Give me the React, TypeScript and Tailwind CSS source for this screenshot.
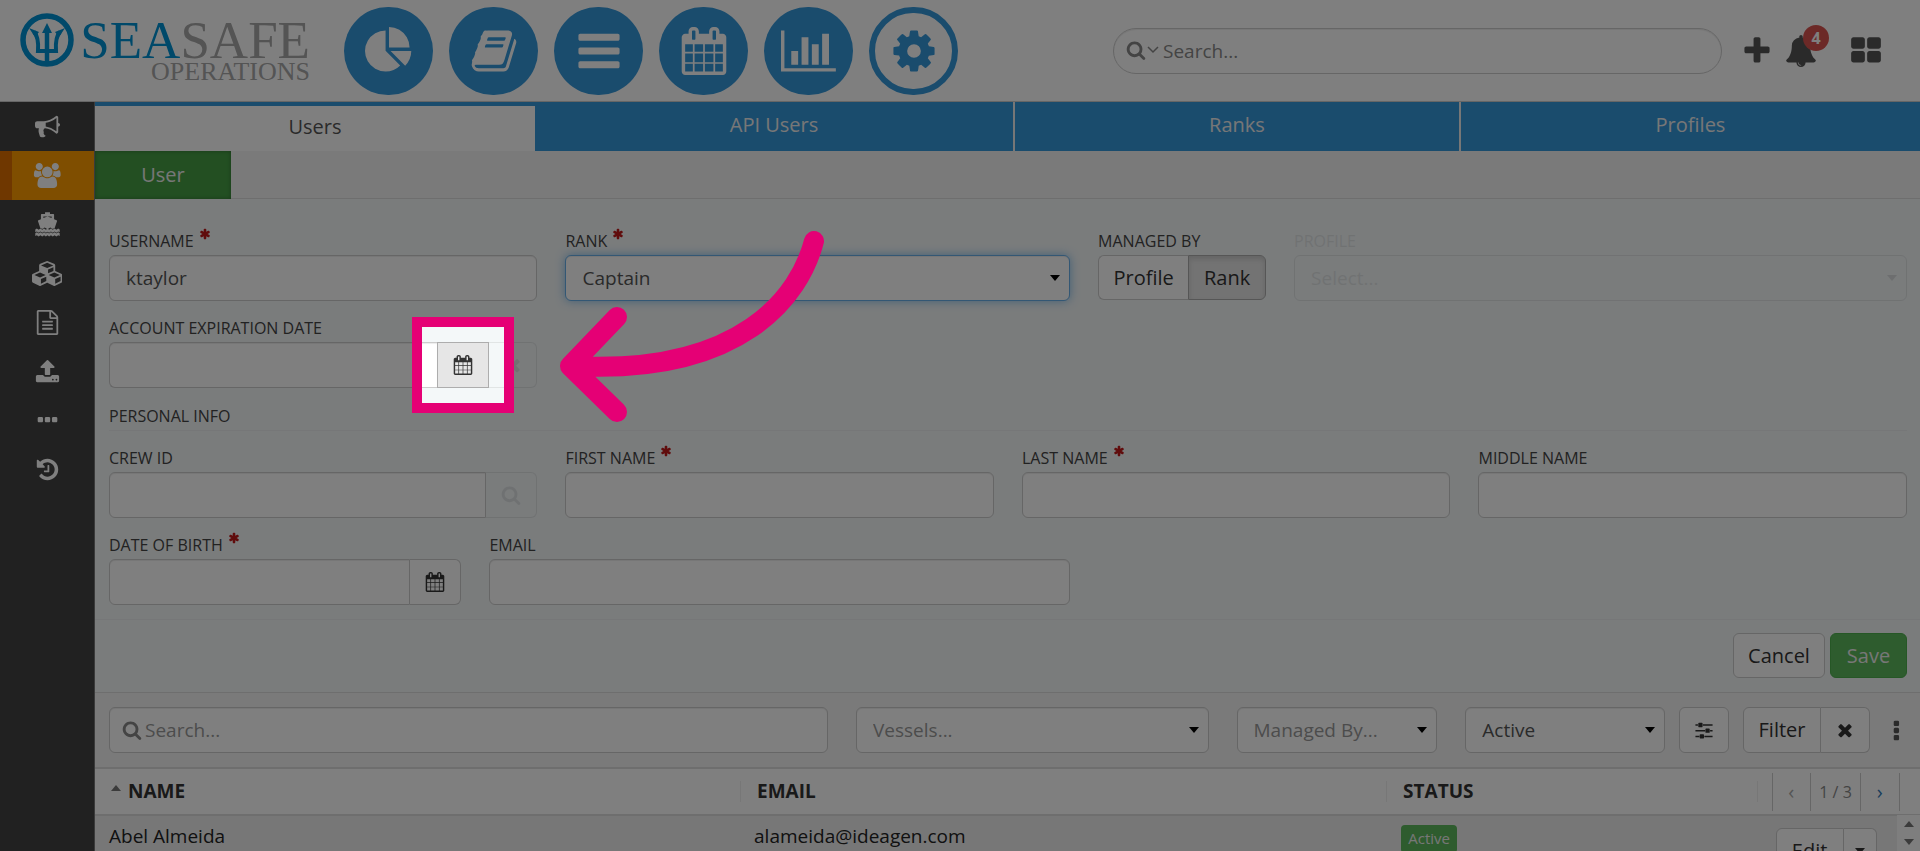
import type { ReactNode } from "react";
import clsx from "clsx";

const icons = {
  search:
    "M1216 832q0-185-131.5-316.5t-316.5-131.5-316.5 131.5-131.5 316.5 131.5 316.5 316.5 131.5 316.5-131.5 131.5-316.5zm512 832q0 52-38 90t-90 38q-54 0-90-38l-343-342q-179 124-399 124-143 0-273.5-55.5t-225-150-150-225-55.5-273.5 55.5-273.5 150-225 225-150 273.5-55.5 273.5 55.5 225 150 150 225 55.5 273.5q0 220-124 399l343 343q37 37 37 90z",
  plus: "M1600 736v192q0 40-28 68t-68 28h-416v416q0 40-28 68t-68 28h-192q-40 0-68-28t-28-68v-416h-416q-40 0-68-28t-28-68v-192q0-40 28-68t68-28h416v-416q0-40 28-68t68-28h192q40 0 68 28t28 68v416h416q40 0 68 28t28 68z",
  bars: "M1664 1344v128q0 26-19 45t-45 19h-1408q-26 0-45-19t-19-45v-128q0-26 19-45t45-19h1408q26 0 45 19t19 45zm0-512v128q0 26-19 45t-45 19h-1408q-26 0-45-19t-19-45v-128q0-26 19-45t45-19h1408q26 0 45 19t19 45zm0-512v128q0 26-19 45t-45 19h-1408q-26 0-45-19t-19-45v-128q0-26 19-45t45-19h1408q26 0 45 19t19 45z",
  calendar:
    "M192 1664h288v-288h-288v288zm352 0h320v-288h-320v288zm-352-352h288v-320h-288v320zm352 0h320v-320h-320v320zm-352-384h288v-288h-288v288zm736 736h320v-288h-320v288zm-384-736h320v-288h-320v288zm768 736h288v-288h-288v288zm-384-352h320v-320h-320v320zm-352-864v-288q0-13-9.500-22.500t-22.500-9.500h-64q-13 0-22.500 9.500t-9.500 22.500v288q0 13 9.500 22.500t22.500 9.500h64q13 0 22.500-9.500t9.500-22.500zm736 864h288v-320h-288v320zm-384-384h320v-288h-320v288zm384 0h288v-288h-288v288zm32-480v-288q0-13-9.500-22.500t-22.500-9.500h-64q-13 0-22.500 9.500t-9.500 22.500v288q0 13 9.500 22.500t22.500 9.500h64q13 0 22.500-9.500t9.500-22.500zm384-64v1280q0 52-38 90t-90 38h-1408q-52 0-90-38t-38-90v-1280q0-52 38-90t90-38h128v-96q0-66 47-113t113-47h64q66 0 113 47t47 113v96h384v-96q0-66 47-113t113-47h64q66 0 113 47t47 113v96h128q52 0 90 38t38 90z",
  barChart: "M640 896v512h-256v-512h256zm384-512v1024h-256v-1024h256zm1024 1152v128h-2048v-1536h128v1408h1920zm-640-896v768h-256v-768h256zm384-384v1152h-256v-1152h256z",
  cog: "M1152 896q0-106-75-181t-181-75-181 75-75 181 75 181 181 75 181-75 75-181zm512-109v222q0 12-8 23t-20 13l-185 28q-19 54-39 91 35 50 107 138 10 12 10 25t-9 23q-27 37-99 108t-94 71q-12 0-26-9l-138-108q-44 23-91 38-16 136-29 186-7 28-36 28h-222q-14 0-24.500-8.500t-11.500-21.500l-28-184q-49-16-90-37l-141 107q-10 9-25 9-14 0-25-11-126-114-165-168-7-10-7-23 0-12 8-23 15-21 51-66.500t54-70.500q-27-50-41-99l-183-27q-13-2-21-12.500t-8-23.500v-222q0-12 8-23t19-13l186-28q14-46 39-92-40-57-107-138-10-12-10-24 0-10 9-23 26-36 98.500-107.500t94.500-71.500q13 0 26 10l138 107q44-23 91-38 16-136 29-186 7-28 36-28h222q14 0 24.500 8.500t11.500 21.500l28 184q49 16 90 37l142-107q9-9 24-9 13 0 25 10 129 119 165 170 7 8 7 22 0 12-8 23-15 21-51 66.500t-54 70.500q26 50 41 98l183 28q13 2 21 12.500t8 23.500z",
  pie: "M768 890l546 546q-106 108-247.500 168t-298.500 60q-209 0-385.500-103t-279.500-279.500-103-385.500 103-385.500 279.500-279.500 385.500-103v762zm187 6h773q0 157-60 298.500t-168 247.500zm709-128h-768v-768q209 0 385.500 103t279.500 279.500 103 385.500z",
  book: "M1703 478q40 57 18 129l-275 906q-19 64-76.500 107.500t-122.500 43.500h-923q-77 0-148.500-53.500t-99.500-131.500q-24-67-2-127 0-4 3-27t4-37q1-8-3-21.500t-3-19.500q2-11 8-21t16.500-23.500 16.500-23.500q23-38 45-91.500t30-91.500q3-10 .5-30t-.5-28q3-11 17-28t17-23q21-36 42-92t25-90q1-9-2.500-32t.5-28q4-13 22-30.500t22-22.500q19-26 42.500-84.500t27.500-96.500q1-8-3-25.500t-2-26.500q2-8 9-18t18-23 17-21q8-12 16.500-30.500t15-35 16-36 19.500-32 26.500-23.500 36-11.500 47.500 5.500l-1 3q38-9 51-9h761q74 0 114 56t18 130l-274 906q-36 119-71.500 153.500t-128.500 34.500h-869q-27 0-38 15-11 16-1 43 24 70 144 70h923q29 0 56-15.500t35-41.500l300-987q7-22 5-57 38 15 59 43zm-1064 2q-4 13 2 22.500t20 9.500h608q13 0 25.500-9.500t16.500-22.500l21-64q4-13-2-22.500t-20-9.500h-608q-13 0-25.500 9.500t-16.500 22.500zm-83 256q-4 13 2 22.500t20 9.500h608q13 0 25.500-9.500t16.500-22.500l21-64q4-13-2-22.500t-20-9.500h-608q-13 0-25.500 9.500t-16.500 22.500z",
  bullhorn:
    "M1664 640q53 0 90.500 37.500t37.500 90.500-37.500 90.500-90.500 37.500v384q0 52-38 90t-90 38q-417-347-812-380-58 19-91 66t-31 100.500 40 92.500q-20 33-23 65.500t6 58 33.500 55 48 50 61.500 50.500q-29 58-111.500 83t-168.500 11.500-132-55.500q-7-23-29.500-87.500t-32-94.500-23-89-15-101 3.500-98.500 22-110.500h-122q-66 0-113-47t-47-113v-192q0-66 47-113t113-47h480q435 0 896-384 52 0 90 38t38 90v384zm-128 604v-954q-394 302-768 343v270q377 42 768 341z",
  users:
    "M657 896q-162 5-265 128h-134q-82 0-138-40.500t-56-118.500q0-353 124-353 6 0 43.500 21t97.500 42.500 119 21.500q67 0 133-23-5 37-5 66 0 139 81 256zm1071 637q0 120-73 189.500t-194 69.500h-874q-121 0-194-69.500t-73-189.500q0-53 3.500-103.500t14-109 26.500-108.500 43-97.500 62-81 85.500-53.500 111.500-20q10 0 43 21.500t73 48 107 48 135 21.500 135-21.500 107-48 73-48 43-21.500q61 0 111.500 20t85.500 53.500 62 81 43 97.500 26.500 108.500 14 109 3.500 103.500zm-1024-1277q0 106-75 181t-181 75-181-75-75-181 75-181 181-75 181 75 75 181zm704 384q0 159-112.500 271.500t-271.500 112.500-271.500-112.500-112.500-271.500 112.500-271.500 271.500-112.500 271.500 112.500 112.500 271.500zm576 225q0 78-56 118.500t-138 40.500h-134q-103-123-265-128 81-117 81-256 0-29-5-66 66 23 133 23 59 0 119-21.500t97.500-42.500 43.500-21q124 0 124 353zm-128-609q0 106-75 181t-181 75-181-75-75-181 75-181 181-75 181 75 75 181z",
  cubes:
    "M640 1632l384-192v-314l-384 164v342zm-64-454l404-173-404-173-404 173zm1088 454l384-192v-314l-384 164v342zm-64-454l404-173-404-173-404 173zm-448-293l384-165v-266l-384 164v267zm-64-379l441-189-441-189-441 189zm1088 518v416q0 36-19 67t-52 47l-448 224q-25 14-57 14t-57-14l-448-224q-4-2-7-4-2 2-7 4l-448 224q-25 14-57 14t-57-14l-448-224q-33-16-52-47t-19-67v-416q0-38 21.500-70t56.500-48l434-186v-400q0-38 21.500-70t56.500-48l448-192q23-10 50-10t50 10l448 192q35 16 56.500 48t21.500 70v400l434 186q36 16 57 48t21 70z",
  file: "M1596 380q28 28 48 76t20 88v1152q0 40-28 68t-68 28h-1344q-40 0-68-28t-28-68v-1600q0-40 28-68t68-28h896q40 0 88 20t76 48zm-444-244v376h376q-10-29-22-41l-313-313q-12-12-41-22zm384 1528v-1024h-416q-40 0-68-28t-28-68v-416h-768v1536h1280zm-1024-864q0-14 9-23t23-9h704q14 0 23 9t9 23v64q0 14-9 23t-23 9h-704q-14 0-23-9t-9-23v-64zm736 224q14 0 23 9t9 23v64q0 14-9 23t-23 9h-704q-14 0-23-9t-9-23v-64q0-14 9-23t23-9h704zm0 256q14 0 23 9t9 23v64q0 14-9 23t-23 9h-704q-14 0-23-9t-9-23v-64q0-14 9-23t23-9h704z",
  upload:
    "M1344 1472q0-26-19-45t-45-19-45 19-19 45 19 45 45 19 45-19 19-45zm256 0q0-26-19-45t-45-19-45 19-19 45 19 45 45 19 45-19 19-45zm128-224v320q0 40-28 68t-68 28h-1472q-40 0-68-28t-28-68v-320q0-40 28-68t68-28h427q21 56 70.500 92t110.500 36h256q61 0 110.500-36t70.500-92h427q40 0 68 28t28 68zm-325-648q-17 40-59 40h-256v448q0 26-19 45t-45 19h-256q-26 0-45-19t-19-45v-448h-256q-42 0-59-40-17-39 14-69l448-448q18-19 45-19t45 19l448 448q31 30 14 69z",
  ellipsis:
    "M576 736v192q0 40-28 68t-68 28h-192q-40 0-68-28t-28-68v-192q0-40 28-68t68-28h192q40 0 68 28t28 68zm512 0v192q0 40-28 68t-68 28h-192q-40 0-68-28t-28-68v-192q0-40 28-68t68-28h192q40 0 68 28t28 68zm512 0v192q0 40-28 68t-68 28h-192q-40 0-68-28t-28-68v-192q0-40 28-68t68-28h192q40 0 68 28t28 68z",
  history:
    "M1664 896q0 156-61 298t-164 245-245 164-298 61q-172 0-327-72.500t-264-204.500q-7-10-6.500-22.500t8.500-20.500l137-138q10-9 25-9 16 2 23 12 73 95 179 147t225 52q104 0 198.500-40.500t163.500-109.500 109.500-163.500 40.500-198.500-40.500-198.500-109.500-163.500-163.500-109.500-198.500-40.500q-98 0-188 35.500t-160 101.500l137 138q31 30 14 69-17 40-59 40h-448q-26 0-45-19t-19-45v-448q0-42 40-59 39-17 69 14l130 129q107-101 244.500-156.500t284.500-55.500q156 0 298 61t245 164 164 245 61 298zm-640-288v448q0 14-9 23t-23 9h-320q-14 0-23-9t-9-23v-64q0-14 9-23t23-9h224v-352q0-14 9-23t23-9h64q14 0 23 9t9 23z",
  thLarge:
    "M832 1024v384q0 52-38 90t-90 38h-512q-52 0-90-38t-38-90v-384q0-52 38-90t90-38h512q52 0 90 38t38 90zm0-768v384q0 52-38 90t-90 38h-512q-52 0-90-38t-38-90v-384q0-52 38-90t90-38h512q52 0 90 38t38 90zm896 768v384q0 52-38 90t-90 38h-512q-52 0-90-38t-38-90v-384q0-52 38-90t90-38h512q52 0 90 38t38 90zm0-768v384q0 52-38 90t-90 38h-512q-52 0-90-38t-38-90v-384q0-52 38-90t90-38h512q52 0 90 38t38 90z",
  bell: "M912 1696q0-16-16-16-59 0-101.500-42.500t-42.500-101.500q0-16-16-16t-16 16q0 73 51.500 124.500t124.500 51.500q16 0 16-16zm816-288q0 52-38 90t-90 38h-448q0 106-75 181t-181 75-181-75-75-181h-448q-52 0-90-38t-38-90q50-42 91-88t85-119.500 74.500-158.500 50-206 19.500-260q0-152 117-282.500t307-158.500q-8-19-8-39 0-40 28-68t68-28 68 28 28 68q0 20-8 39 190 28 307 158.500t117 282.500q0 139 19.500 260t50 206 74.500 158.500 85 119.500 91 88z",
  times:
    "M1490 1322q0 40-28 68l-136 136q-28 28-68 28t-68-28l-294-294-294 294q-28 28-68 28t-68-28l-136-136q-28-28-28-68t28-68l294-294-294-294q-28-28-28-68t28-68l136-136q28-28 68-28t68 28l294 294 294-294q28-28 68-28t68 28l136 136q28 28 28 68t-28 68l-294 294 294 294q28 28 28 68z",
  asterisk:
    "M1546 1050q46 26 59.500 77.500t-12.500 97.500l-64 110q-26 46-77.500 59.500t-97.500-12.500l-266-153v307q0 52-38 90t-90 38h-128q-52 0-90-38t-38-90v-307l-266 153q-46 26-97.500 12.500t-77.500-59.500l-64-110q-26-46-12.500-97.500t59.500-77.500l266-154-266-154q-46-26-59.500-77.500t12.500-97.500l64-110q26-46 77.500-59.500t97.500 12.500l266 153v-307q0-52 38-90t90-38h128q52 0 90 38t38 90v307l266-153q46-26 97.500-12.500t77.500 59.500l64 110q26 46 12.500 97.500t-59.500 77.500l-266 154z",
  sliders:
    "M480 1408v128h-352v-128h352zm352-128q26 0 45 19t19 45v256q0 26-19 45t-45 19h-256q-26 0-45-19t-19-45v-256q0-26 19-45t45-19h256zm160-384v128h-864v-128h864zm-640-512v128h-224v-128h224zm1312 1024v128h-736v-128h736zm-960-1152q26 0 45 19t19 45v256q0 26-19 45t-45 19h-256q-26 0-45-19t-19-45v-256q0-26 19-45t45-19h256zm640 512q26 0 45 19t19 45v256q0 26-19 45t-45 19h-256q-26 0-45-19t-19-45v-256q0-26 19-45t45-19h256zm320 128v128h-224v-128h224zm0-512v128h-864v-128h864z",
  ship: "M720 20h352v120h240q56 0 56 56v320l180 70q48 20 34 68l-170 500q-58 46-126 46-70 0-130-62-30-24-60-24t-60 24q-70 62-140 62t-140-62q-30-24-60-24t-60 24q-60 62-130 62-68 0-126-46l-170-500q-14-48 34-68l180-70v-320q0-56 56-56h240v-120zm-120 300v110l296-110 296 110v-110h-592zM20 1250l110-70 130 90 130-90 130 90 130-90 130 90 116-80 116 80 130-90 130 90 130-90 130 90 130-90 110 70v210l-110-60-130 90-130-90-130 90-130-90-130 90-116-80-116 80-130-90-130 90-130-90-130 90-130-90-110 60zM20 1530l110-70 130 90 130-90 130 90 130-90 130 90 116-80 116 80 130-90 130 90 130-90 130 90 130-90 110 70v190l-110-60-130 90-130-90-130 90-130-90-130 90-116-80-116 80-130-90-130 90-130-90-130 90-130-90-110 60z",
};

type IconName = keyof typeof icons;

const viewBoxes: Partial<Record<IconName, string>> = {
  barChart: "0 0 2048 1792",
  users: "0 0 2048 1792",
  cubes: "0 0 2176 1792",
};

function Icon({ name, className }: { name: IconName; className?: string }) {
  return (
    <svg viewBox={viewBoxes[name] ?? "0 0 1792 1792"} fill="currentColor" className={clsx("shrink-0", className)} aria-hidden="true">
      <path d={icons[name]} />
    </svg>
  );
}

function Caret({ className }: { className?: string }) {
  return (
    <svg viewBox="0 0 10 6" fill="currentColor" className={clsx("h-[6px] w-[10px]", className)} aria-hidden="true">
      <path d="M0 0h10L5 6z" />
    </svg>
  );
}

const box = "h-[46px] w-full min-w-0 rounded-md border px-4 text-[19px] outline-none placeholder:text-[#999]";
const control = clsx(box, "border-[#ccc] bg-white text-[#555] shadow-[inset_0_1px_1px_rgba(0,0,0,0.075)]");
const button = "flex items-center justify-center border border-[#ccc] bg-white text-[20px] text-[#333]";
const disabledButton = "flex h-[46px] shrink-0 items-center justify-center rounded-r-md border border-l-0 border-[#444] text-[#333] opacity-10";

type FieldProps = {
  id: string;
  label: string;
  required?: boolean;
  className?: string;
  children: ReactNode;
};

function Field({ id, label, required, className, children }: FieldProps) {
  return (
    <div className={className}>
      <label htmlFor={id} className="mb-px flex gap-[5px] text-[16px] leading-[26px] text-[#444] uppercase">
        {label}
        {required && <Icon name="asterisk" className="size-3 text-[#c01818]" />}
      </label>
      {children}
    </div>
  );
}

type SelectProps = {
  id: string;
  value: string;
  label?: string;
  variant?: "default" | "muted" | "focused" | "disabled";
};

const selectStyles = {
  default: "border-[#ccc] bg-white text-[#555] shadow-[inset_0_1px_1px_rgba(0,0,0,0.075)]",
  muted: "border-[#ccc] bg-white text-[#999] shadow-[inset_0_1px_1px_rgba(0,0,0,0.075)]",
  focused: "border-[#66afe9] bg-white text-[#555] shadow-[inset_0_1px_1px_rgba(0,0,0,0.075),0_0_10px_rgba(102,175,233,0.8)]",
  disabled: "border-[#444] bg-transparent text-[#444]",
};

function Select({ id, value, label, variant = "default" }: SelectProps) {
  return (
    <div className="relative">
      <select
        id={id}
        aria-label={label}
        disabled={variant === "disabled"}
        className={clsx(box, "appearance-none opacity-100", selectStyles[variant])}
      >
        <option>{value}</option>
      </select>
      <Caret className="pointer-events-none absolute top-5 right-[10px] text-black" />
    </div>
  );
}

function Logo() {
  return (
    <div className="flex w-[310px] justify-between pl-5">
      <svg viewBox="0 0 54 54" className="mt-[13px] size-[54px] shrink-0" fill="none" stroke="#0092d4" aria-hidden="true">
        <circle cx="27" cy="27" r="24" strokeWidth="5.500" />
        <path d="M27 18v33" strokeWidth="4.500" />
        <path d="M14 19q5 5 4 19h18q-1-14 4-19" strokeWidth="4" />
        <path d="M27 10l5 10H22zM9 15l10 4-4 5zM45 15l-10 4 4 5z" fill="#0092d4" stroke="none" />
      </svg>
      <div className="flex flex-col items-end pt-[19px] font-['Liberation_Serif',serif] text-[#a8a8a8]">
        <span className="text-[53px] leading-[42px]">
          <span className="text-[#0092d4]">SEA</span>SAFE
        </span>
        <span className="text-[26px] leading-[22px]">OPERATIONS</span>
      </div>
    </div>
  );
}

const modules: { icon: IconName; label: string; active?: boolean }[] = [
  { icon: "pie", label: "Dashboard" },
  { icon: "book", label: "Library" },
  { icon: "bars", label: "Lists" },
  { icon: "calendar", label: "Calendar" },
  { icon: "barChart", label: "Reports" },
  { icon: "cog", label: "Settings", active: true },
];

function Header() {
  return (
    <header className="flex h-[102px] shrink-0 border-b border-[#ccc] bg-white">
      <Logo />
      <nav className="ml-[34px] flex gap-4 pt-[7px]">
        {modules.map(({ icon, label, active }) => (
          <a
            key={icon}
            href="#"
            aria-label={label}
            className={clsx(
              "flex h-[88px] w-[89px] items-center justify-center rounded-full",
              active ? "border-6 border-[#3498db] bg-white text-[#3498db]" : "bg-[#3498db] text-white"
            )}
          >
            <Icon name={icon} className="h-12" />
          </a>
        ))}
      </nav>

      <div className="ml-[155px] flex min-w-0 flex-1 items-center">
        <div className="relative flex-1">
          <div className="absolute top-3 left-[13px] flex items-center gap-px text-[#888]">
            <Icon name="search" className="size-5" />
            <svg viewBox="0 0 12 8" className="h-2 w-3" fill="none" stroke="currentColor" strokeWidth="1.500" aria-hidden="true">
              <path d="M1 1l5 5 5-5" />
            </svg>
          </div>
          <input
            type="text"
            aria-label="Search"
            placeholder="Search..."
            className="h-[46px] w-full rounded-full border border-[#ccc] bg-white pr-4 pl-[49px] text-[19px] outline-none shadow-[inset_0_1px_1px_rgba(0,0,0,0.075)] placeholder:text-[#888]"
          />
        </div>
        <button type="button" aria-label="Add" className="ml-[19px] text-[#555]">
          <Icon name="plus" className="size-8" />
        </button>
        <button type="button" aria-label="Notifications" className="relative ml-3 text-[#555]">
          <Icon name="bell" className="size-8" />
          <span className="absolute -top-[10px] -right-3 flex size-[26px] items-center justify-center rounded-full bg-[#d9534f] text-[16px] font-bold text-white">
            4
          </span>
        </button>
        <button type="button" aria-label="Applications" className="mr-[38px] ml-[33px] text-[#555]">
          <Icon name="thLarge" className="size-8" />
        </button>
      </div>
    </header>
  );
}

const sideItems: { icon: IconName; label: string; active?: boolean }[] = [
  { icon: "bullhorn", label: "Announcements" },
  { icon: "users", label: "Users", active: true },
  { icon: "ship", label: "Vessels" },
  { icon: "cubes", label: "Inventory" },
  { icon: "file", label: "Documents" },
  { icon: "upload", label: "Uploads" },
  { icon: "ellipsis", label: "More" },
  { icon: "history", label: "History" },
];

function Sidebar() {
  return (
    <nav className="w-[95px] shrink-0 border-r border-[#777] bg-[#424242]">
      {sideItems.map(({ icon, label, active }) => (
        <a
          key={icon}
          href="#"
          aria-label={label}
          className={clsx(
            "flex h-[49px] items-center justify-center text-white",
            active && "border-l-12 border-[#de6e00] bg-[#ff9c00] pr-3"
          )}
        >
          <Icon name={icon} className="h-[25px]" />
        </a>
      ))}
    </nav>
  );
}

function Tabs() {
  return (
    <>
      <div className="grid h-[49px] shrink-0 grid-cols-[440fr_480fr_446fr_459fr] text-center text-[20px] leading-[46px]">
        <a href="#" className="border-t-4 border-[#3498db] bg-white leading-[42px] text-[#555]">Users</a>
        <a href="#" className="border-r-2 border-[#eee] bg-[#3498db] text-[#eee]">API Users</a>
        <a href="#" className="border-r-2 border-[#eee] bg-[#3498db] text-[#eee]">Ranks</a>
        <a href="#" className="bg-[#3498db] text-[#eee]">Profiles</a>
      </div>
      <div className="flex h-12 shrink-0 border-b border-[#ddd] bg-[#f4f4f4]">
        <a href="#" className="h-12 w-[136px] bg-[#469f45] text-center text-[20px] leading-[48px] text-[#eee] shadow-[inset_0_0_4px_rgba(0,0,0,0.3)]">
          User
        </a>
      </div>
    </>
  );
}

// Cut-out around the calendar button: its spread shadow dims the rest of the page.
function Spotlight() {
  return (
    <>
      <div className="pointer-events-none absolute -inset-[25px] z-40 border-10 border-[#e50075] shadow-[0_0_0_9999px_rgba(0,0,0,0.5)]" />
      <svg
        viewBox="555 225 275 205"
        className="pointer-events-none absolute -top-[117px] left-[117px] z-50 h-[205px] w-[275px]"
        fill="none"
        stroke="#e50075"
        strokeWidth="20"
        strokeLinecap="round"
        strokeLinejoin="round"
        aria-hidden="true"
      >
        <path d="M815 241C801 295 744 376 571 366M618 317L571 366L618 412" />
      </svg>
    </>
  );
}

function UserForm() {
  return (
    <form className="shrink-0 border-b border-[#ddd] bg-[#f4f8f9]">
      <div className="grid grid-cols-24 gap-x-7 gap-y-[14px] pt-[29px] pr-[13px] pb-[14px] pl-[14px]">
        <Field id="username" label="Username" required className="col-span-6">
          <input id="username" type="text" defaultValue="ktaylor" className={control} />
        </Field>
        <Field id="rank" label="Rank" required className="col-span-7">
          <Select id="rank" value="Captain" variant="focused" />
        </Field>
        <div className="col-span-11 flex gap-7">
          <div role="group" aria-labelledby="managed-by">
            <div id="managed-by" className="mb-px text-[16px] leading-[26px] text-[#444] uppercase">
              Managed by
            </div>
            <div className="flex">
              <button type="button" className={clsx(button, "h-[45px] w-[90px] rounded-l-md border-r-0")}>
                Profile
              </button>
              <button
                type="button"
                aria-pressed="true"
                className="flex h-[45px] w-[78px] items-center justify-center rounded-r-md border border-[#adadad] bg-[#e6e6e6] text-[20px] text-[#333] shadow-[inset_0_3px_5px_rgba(0,0,0,0.125)]"
              >
                Rank
              </button>
            </div>
          </div>
          <Field id="profile" label="Profile" className="flex-1 opacity-10">
            <Select id="profile" value="Select..." variant="disabled" />
          </Field>
        </div>

        <Field id="expiration" label="Account expiration date" className="col-span-6">
          <div className="flex">
            <input id="expiration" type="text" className={clsx(control, "rounded-r-none border-r-0")} />
            <div className="relative">
              <button
                type="button"
                aria-label="Pick expiration date"
                className="flex h-[46px] w-[52px] items-center justify-center border border-[#adadad] bg-[#e6e6e6] text-[#333]"
              >
                <Icon name="calendar" className="size-5" />
              </button>
              <Spotlight />
            </div>
            <button type="button" disabled aria-label="Clear expiration date" className={clsx(disabledButton, "w-12")}>
              <Icon name="times" className="size-5" />
            </button>
          </div>
        </Field>

        <h2 className="col-span-24 border-b border-[#eceff0] text-[16px] leading-7 text-[#444] uppercase">Personal info</h2>

        <Field id="crew" label="Crew ID" className="col-span-6">
          <div className="flex">
            <input id="crew" type="text" className={clsx(control, "rounded-r-none")} />
            <button type="button" disabled aria-label="Find crew member" className={clsx(disabledButton, "w-[51px]")}>
              <Icon name="search" className="size-5" />
            </button>
          </div>
        </Field>
        <Field id="first" label="First name" required className="col-span-6">
          <input id="first" type="text" className={control} />
        </Field>
        <Field id="last" label="Last name" required className="col-span-6">
          <input id="last" type="text" className={control} />
        </Field>
        <Field id="middle" label="Middle name" className="col-span-6">
          <input id="middle" type="text" className={control} />
        </Field>

        <Field id="birth" label="Date of birth" required className="col-span-5">
          <div className="flex">
            <input id="birth" type="text" className={clsx(control, "rounded-r-none")} />
            <button type="button" aria-label="Pick date of birth" className={clsx(button, "h-[46px] w-[51px] shrink-0 rounded-r-md border-l-0")}>
              <Icon name="calendar" className="size-5" />
            </button>
          </div>
        </Field>
        <Field id="email" label="Email" className="col-span-8">
          <input id="email" type="email" className={control} />
        </Field>
      </div>

      <div className="flex justify-end gap-[5px] border-t border-[#eceff0] px-[13px] pt-[13px] pb-[14px]">
        <button type="button" className={clsx(button, "h-[45px] w-[92px] rounded-md")}>Cancel</button>
        <button type="submit" className="h-[45px] w-[77px] rounded-md border border-[#4cae4c] bg-[#5cb85c] text-[20px] text-[#eee]">
          Save
        </button>
      </div>
    </form>
  );
}

function FilterBar() {
  return (
    <div className="flex shrink-0 gap-[14px] border-b-2 border-[#ddd] bg-[#f4f4f4] pt-[14px] pr-[13px] pb-[14px] pl-[14px]">
      <div className="grid flex-1 grid-cols-[720fr_353fr_201fr_200fr] gap-7">
        <div className="relative">
          <Icon name="search" className="absolute top-[13px] left-[13px] size-5 text-[#888]" />
          <input type="text" aria-label="Search users" placeholder="Search..." className={clsx(control, "pl-[35px]")} />
        </div>
        <Select id="vessels" label="Vessels" value="Vessels..." variant="muted" />
        <Select id="managed" label="Managed by" value="Managed By..." variant="muted" />
        <Select id="state" label="Status" value="Active" />
      </div>
      <button type="button" aria-label="Filter options" className={clsx(button, "h-[46px] w-[50px] rounded-md")}>
        <Icon name="sliders" className="size-5" />
      </button>
      <div className="flex">
        <button type="button" className={clsx(button, "h-[46px] w-[78px] rounded-l-md")}>Filter</button>
        <button type="button" aria-label="Clear filter" className={clsx(button, "h-[46px] w-[49px] rounded-r-md border-l-0")}>
          <Icon name="times" className="size-5" />
        </button>
      </div>
      <button type="button" aria-label="More actions" className="flex w-[23px] items-center justify-center text-[#555]">
        <Icon name="ellipsis" className="size-[25px] rotate-90" />
      </button>
    </div>
  );
}

function UserTable() {
  return (
    <div className="relative min-h-0 flex-1 overflow-hidden bg-[#eee]">
      <table className="w-full table-fixed border-collapse text-left text-[19px] text-[#222]">
        <colgroup>
          <col className="w-[35.4%]" />
          <col className="w-[35.4%]" />
          <col className="w-[20.3%]" />
          <col />
        </colgroup>
        <thead className="bg-white text-[#333] uppercase">
          <tr className="h-[46px] border-b-2 border-[#ddd]">
            <th className="py-0 pl-4">
              <div className="flex h-[21px] items-center justify-between border-r border-[#eee]">
                <span className="flex items-center gap-[7px]">
                  <Caret className="mb-2 rotate-180 text-[#777]" />
                  Name
                </span>
              </div>
            </th>
            <th className="py-0">
              <div className="flex h-[21px] items-center border-r border-[#eee] pl-4">Email</div>
            </th>
            <th className="py-0">
              <div className="flex h-[21px] items-center border-r border-[#eee] pl-4">Status</div>
            </th>
            <th className="py-0 pl-[14px] font-normal">
              <div className="flex h-[38px] w-[128px] items-center border-x border-[#ccc] text-center text-[16px] text-[#888]">
                <button type="button" aria-label="Previous page" className="flex-1 text-[20px] text-[#aaa]">‹</button>
                <span className="w-[51px] border-x border-[#ccc] leading-[38px]">1 / 3</span>
                <button type="button" aria-label="Next page" className="flex-1 text-[20px] text-[#337ab7]">›</button>
              </div>
            </th>
          </tr>
        </thead>
        <tbody>
          <tr className="align-top">
            <td className="pt-[6px] pl-[14px]">Abel Almeida</td>
            <td className="pt-[6px] pl-[13px]">alameida@ideagen.com</td>
            <td className="pt-[9px] pl-[14px]">
              <span className="block h-7 w-14 rounded-sm bg-[#5cb85c] text-center text-[15px] leading-[27px] text-[#eee]">Active</span>
            </td>
            <td className="pt-3 pl-[18px]">
              <div className="flex">
                <button type="button" className={clsx(button, "h-[45px] w-[68px] rounded-l-md")}>Edit</button>
                <button type="button" aria-label="More row actions" className={clsx(button, "h-[45px] w-[33px] rounded-r-md border-l-0")}>
                  <Caret />
                </button>
              </div>
            </td>
          </tr>
        </tbody>
      </table>
      <div className="absolute top-[46px] right-0 bottom-0 flex w-[23px] flex-col items-center justify-around bg-[#fcfcfc] text-[#777]">
        <Caret className="rotate-180" />
        <Caret />
      </div>
    </div>
  );
}

export default function App() {
  return (
    <div className="flex h-screen flex-col overflow-hidden bg-white font-['Open_Sans',sans-serif]">
      <Header />
      <div className="flex min-h-0 flex-1">
        <Sidebar />
        <main className="flex min-w-0 flex-1 flex-col">
          <Tabs />
          <UserForm />
          <FilterBar />
          <UserTable />
        </main>
      </div>
    </div>
  );
}
